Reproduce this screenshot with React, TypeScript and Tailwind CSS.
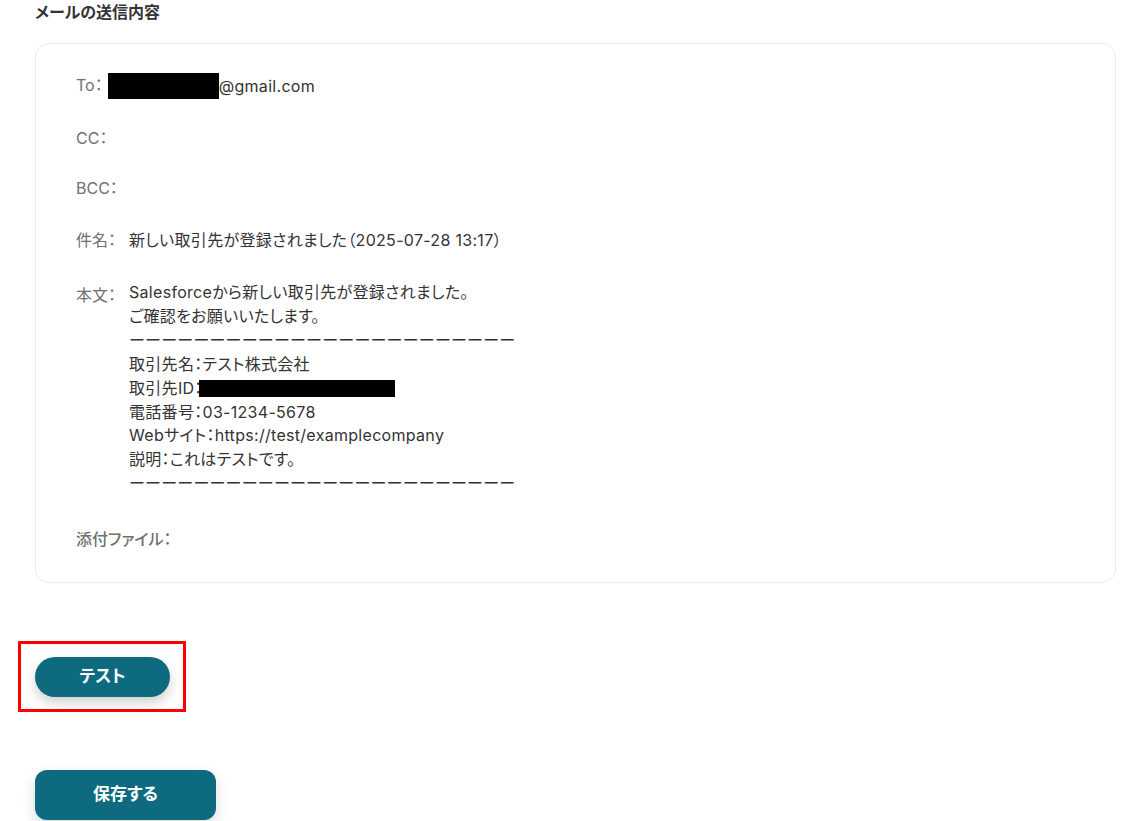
import React from 'react';

const Row: React.FC<{ label: string; children?: React.ReactNode; className?: string }> = ({ label, children, className }) => (
  <div className={`flex items-start ${className ?? ''}`}>
    <span className="text-[#707070] whitespace-nowrap">{label}</span>
    {children}
  </div>
);

const App: React.FC = () => {
  const dashes = 'ーーーーーーーーーーーーーーーーーーーーーーーー';

  return (
    <div
      className="w-[1131px] h-[821px] bg-white overflow-hidden text-[#333] text-[16px] [font-feature-settings:'palt']"
      style={{ fontFamily: '"Inter", "Noto Sans CJK JP", sans-serif' }}
    >
      <div className="pl-[35px] pr-[16px] pt-[2px]">
        <h2 className="text-[16px] font-bold text-[#333] leading-[20px]">メールの送信内容</h2>

        {/* Mail preview */}
        <div className="mt-[21px] w-[1081px] h-[540px] border border-[#ececec] rounded-[14px] pl-[40px] pt-[29px]">
          <Row label="To：" className="leading-[24px]">
            <span className="flex items-center">
              <span className="inline-block bg-black w-[111px] h-[26px] ml-[5px]" />
              <span className="tracking-[0.3px]">@gmail.com</span>
            </span>
          </Row>
          <Row label="CC：" className="mt-[27px] leading-[24px]" />
          <Row label="BCC：" className="mt-[26px] leading-[24px]" />
          <Row label="件名：" className="mt-[28px] leading-[24px]">
            <span className="ml-[13px] tracking-[0.3px]">新しい取引先が登録されました（2025-07-28 13:17）</span>
          </Row>
          <Row label="本文：" className="mt-[31px] leading-[24px]">
            <div className="ml-[13px] leading-[23.9px] tracking-[0.3px] -mt-[2px]">
              <div>Salesforceから新しい取引先が登録されました。</div>
              <div>ご確認をお願いいたします。</div>
              <div className="text-[16px] tracking-[0.1px] [font-feature-settings:normal]">{dashes}</div>
              <div>取引先名：テスト株式会社</div>
              <div className="flex items-center">
                <span>取引先ID：</span>
                <span className="-ml-[4px] inline-block bg-black w-[196px] h-[17px]" />
              </div>
              <div>電話番号：03-1234-5678</div>
              <div>Webサイト：https://test/examplecompany</div>
              <div>説明：これはテストです。</div>
              <div className="text-[16px] tracking-[0.1px] [font-feature-settings:normal]">{dashes}</div>
            </div>
          </Row>
          <Row label="添付ファイル：" className="mt-[31px] leading-[24px] font-medium" />
        </div>

        {/* Test button with highlight */}
        <div className="mt-[58px] -ml-[17px] w-[168px] h-[71px] border-[3px] border-[#ff0000] flex items-center pl-[14px]">
          <button className="w-[135px] h-[40px] rounded-full bg-[#0d6a7f] text-white font-bold text-[17px] shadow-[0_6px_12px_rgba(0,0,0,0.18)]">
            テスト
          </button>
        </div>

        <button className="mt-[58px] w-[181px] h-[50px] rounded-[12px] bg-[#0d6a7f] text-white font-bold text-[17px] shadow-[0_6px_14px_rgba(0,0,0,0.15)]">
          保存する
        </button>
      </div>
    </div>
  );
};

export default App;
